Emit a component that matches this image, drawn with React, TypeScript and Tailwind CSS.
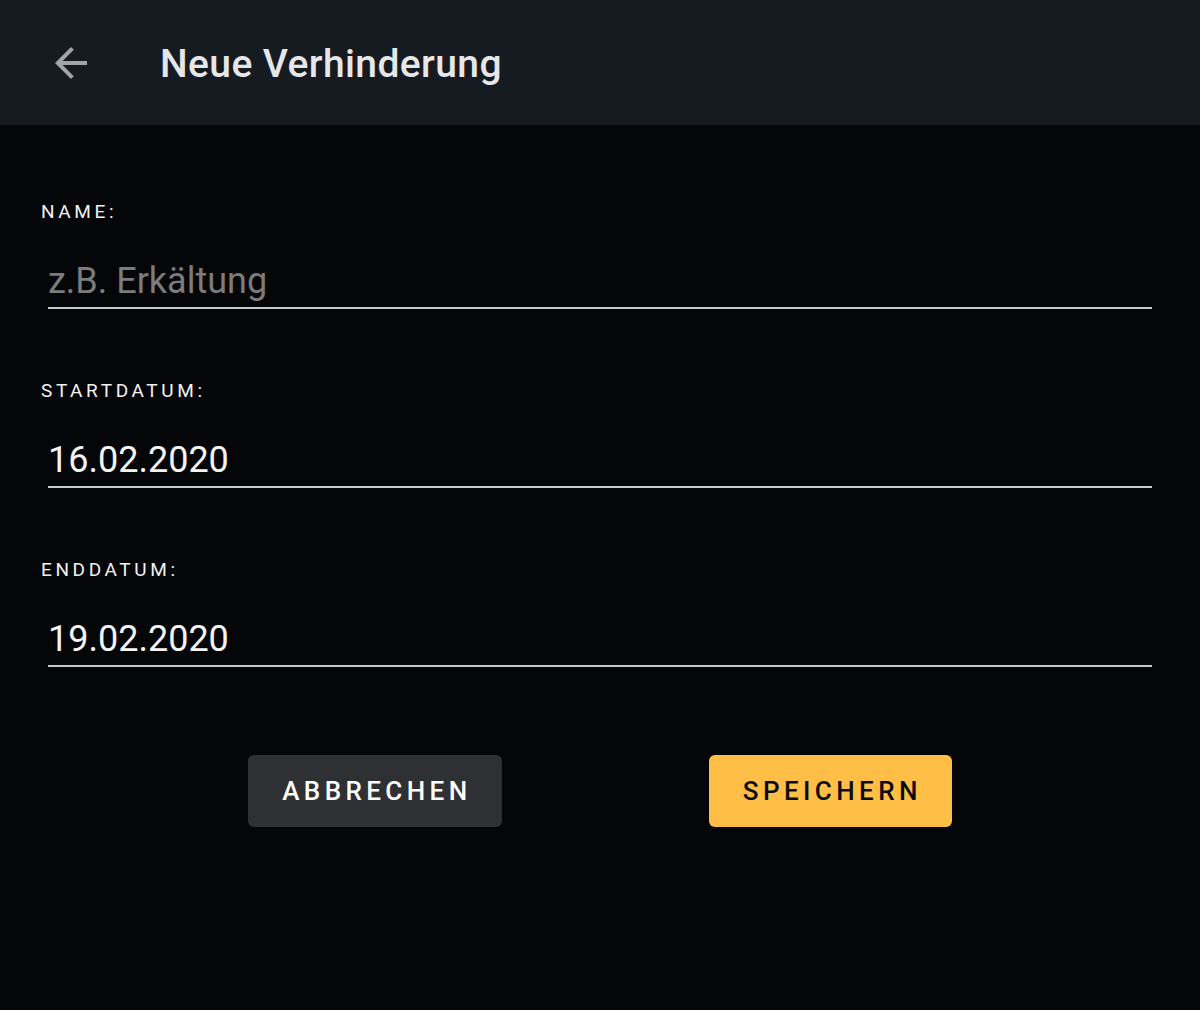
import React from 'react';

const Field: React.FC<{ label: string; value?: string; placeholder?: string }> = ({
  label,
  value,
  placeholder,
}) => (
  <div className="flex flex-col">
    <label className="text-[19px] leading-6 tracking-[0.19em] text-[#f2f2f2]">{label}</label>
    <input
      type="text"
      defaultValue={value}
      placeholder={placeholder}
      className="mt-[33px] mx-[7px] h-[52px] pb-[2px] text-[36px] leading-[48px] text-[#f4f4f4] placeholder:text-[#7c7c7c] bg-transparent border-b-2 border-[#c9c9c9] outline-none"
    />
  </div>
);

const App: React.FC = () => {
  return (
    <div className="min-h-[1010px] bg-[#050608] font-['Roboto',sans-serif]">
      <header className="h-[125px] bg-[#161a21] flex items-center">
        <button className="ml-[47px] w-12 h-12 text-[#a2a4a8]" aria-label="Zurück">
          <svg viewBox="0 0 24 24" width="48" height="48" fill="currentColor">
            <path d="M20 11H7.83l5.59-5.59L12 4l-8 8 8 8 1.41-1.41L7.83 13H20v-2z" />
          </svg>
        </button>
        <h1 className="ml-[65px] mt-[3px] text-[39px] tracking-[0.01em] font-medium text-[#e6e7e9]">
          Neue Verhinderung
        </h1>
      </header>

      <main className="px-[41px] pt-[75px]">
        <div className="flex flex-col gap-[70px]">
          <Field label="NAME:" placeholder="z.B. Erkältung" />
          <Field label="STARTDATUM:" value="16.02.2020" />
          <Field label="ENDDATUM:" value="19.02.2020" />
        </div>

        <div className="mt-[88px] flex justify-evenly">
          <button className="h-[72px] pl-[34px] pr-[30px] rounded-md bg-[#2f3033] text-white text-[26px] font-medium tracking-[0.17em]">
            ABBRECHEN
          </button>
          <button className="h-[72px] pl-[34px] pr-[30px] rounded-md bg-[#ffbe45] text-[#0b0b0b] text-[26px] font-medium tracking-[0.17em]">
            SPEICHERN
          </button>
        </div>
      </main>
    </div>
  );
};

export default App;
